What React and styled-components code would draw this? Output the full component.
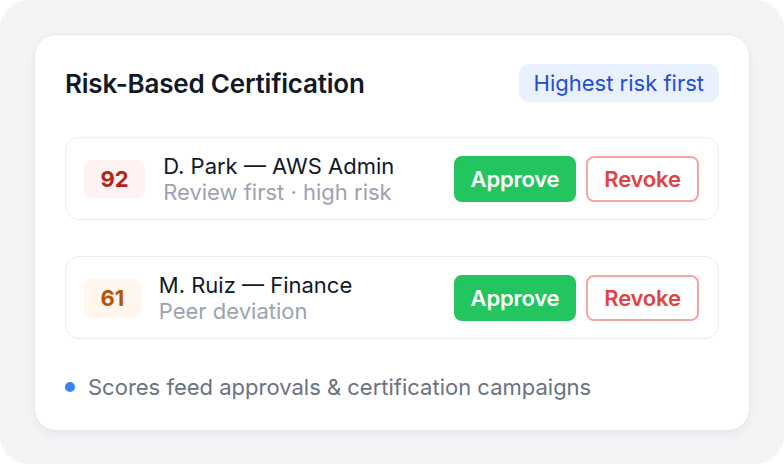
import React from "react";
import styled, { createGlobalStyle } from "styled-components";

const Global = createGlobalStyle`
  html, body { margin: 0; padding: 0; background: #ffffff; }
  body { font-family: Inter, "Noto Sans", "Liberation Sans", sans-serif; -webkit-font-smoothing: antialiased; }
  * { box-sizing: border-box; }
`;

const Stage = styled.div`
  width: 784px;
  height: 464px;
  background: #f3f4f6;
  border-radius: 28px;
  padding: 34px;
  display: flex;
`;

const Card = styled.div`
  width: 716px;
  height: 397px;
  background: #ffffff;
  border: 1px solid #e5e7eb;
  border-radius: 22px;
  box-shadow: 0 4px 10px rgba(17, 24, 39, 0.05);
  padding: 29px 30px 30px;
  display: flex;
  flex-direction: column;
  gap: 35px;
`;

const Header = styled.div`
  display: flex;
  align-items: center;
  justify-content: space-between;
  height: 38px;
`;

const Title = styled.h1`
  margin: 0;
  font-size: 26px;
  font-weight: 600;
  color: #111827;
  letter-spacing: -0.2px;
`;

const Pill = styled.span`
  height: 38px;
  padding: 0 15px;
  display: inline-flex;
  align-items: center;
  background: #eaf1fe;
  color: #1d4ed8;
  border-radius: 10px;
  font-size: 22px;
  font-weight: 400;
`;

const List = styled.div`
  display: flex;
  flex-direction: column;
  gap: 36px;
`;

const Row = styled.div`
  height: 83px;
  border: 1px solid #eceef1;
  border-radius: 14px;
  padding: 0 19px 0 18px;
  display: flex;
  align-items: center;
  gap: 18px;
`;

const tones = {
  high: { bg: "#fef2f2", fg: "#b42318" },
  mid: { bg: "#fff7ed", fg: "#b45309" },
};

const Score = styled.span`
  height: 38px;
  padding: 0 16.5px;
  display: inline-flex;
  align-items: center;
  border-radius: 8px;
  font-size: 22px;
  font-weight: 700;
  background: ${(p) => tones[p.$tone].bg};
  color: ${(p) => tones[p.$tone].fg};
`;

const Info = styled.div`
  flex: 1;
  display: flex;
  flex-direction: column;
  line-height: 26px;
`;

const Name = styled.span`
  font-size: 22px;
  font-weight: 400;
  color: #111827;
`;

const Sub = styled.span`
  font-size: 22px;
  color: #9ca3af;
`;

const Actions = styled.div`
  display: flex;
  gap: 10px;
`;

const Button = styled.button`
  height: 46px;
  padding: 0;
  border-radius: 8px;
  font-family: inherit;
  font-size: 22px;
  font-weight: 600;
  letter-spacing: -0.2px;
  cursor: pointer;
  ${(p) =>
    p.$variant === "approve"
      ? `background:#22c55e;color:#ffffff;border:2px solid #22c55e;width:122px;`
      : `background:#ffffff;color:#e04343;border:2px solid #f6a4a4;width:113px;`}
`;

const Footer = styled.div`
  display: flex;
  align-items: center;
  gap: 13px;
  height: 24px;
  margin-top: 1px;
`;

const Dot = styled.span`
  width: 10px;
  height: 10px;
  border-radius: 50%;
  background: #3b82f6;
`;

const Note = styled.span`
  font-size: 22px;
  color: #6b7280;
`;

const rows = [
  { score: 92, tone: "high", name: "D. Park — AWS Admin", sub: "Review first · high risk" },
  { score: 61, tone: "mid", name: "M. Ruiz — Finance", sub: "Peer deviation" },
];

export default function App() {
  return (
    <>
      <Global />
      <Stage>
        <Card>
          <Header>
            <Title>Risk-Based Certification</Title>
            <Pill>Highest risk first</Pill>
          </Header>
          <List>
            {rows.map((r) => (
              <Row key={r.score}>
                <Score $tone={r.tone}>{r.score}</Score>
                <Info>
                  <Name>{r.name}</Name>
                  <Sub>{r.sub}</Sub>
                </Info>
                <Actions>
                  <Button $variant="approve">Approve</Button>
                  <Button $variant="revoke">Revoke</Button>
                </Actions>
              </Row>
            ))}
          </List>
          <Footer>
            <Dot />
            <Note>Scores feed approvals &amp; certification campaigns</Note>
          </Footer>
        </Card>
      </Stage>
    </>
  );
}
